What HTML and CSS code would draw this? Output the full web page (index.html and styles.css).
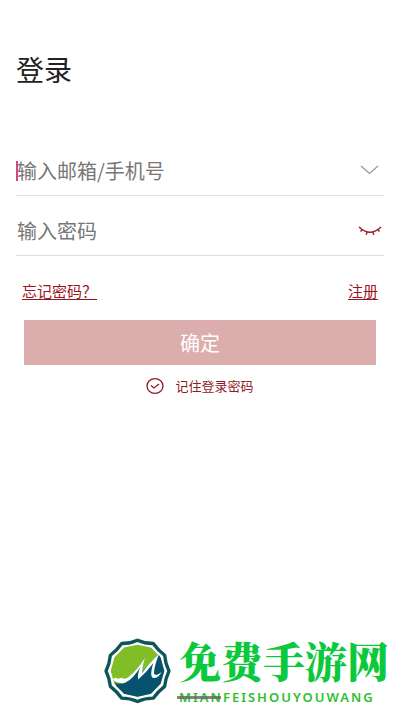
FILE: index.html
```html
<!DOCTYPE html>
<html lang="zh-CN">
<head>
    <meta charset="UTF-8">
    <meta name="viewport" content="width=device-width, initial-scale=1.0">
    <title>登录</title>
    <link rel="stylesheet" href="styles.css">
</head>
<body>
    <main class="login">
        <h1>登录</h1>

        <form>
            <div class="field">
                <span class="caret"></span>
                <input type="text" placeholder="输入邮箱/手机号" aria-label="输入邮箱/手机号">
                <button type="button" class="icon-button" aria-label="历史账号">
                    <svg width="24" height="20" viewBox="0 0 24 20" fill="none" stroke="#999" stroke-width="1.3">
                        <path d="M3 6 L11.500 13.500 L20 6"/>
                    </svg>
                </button>
            </div>
            <div class="field">
                <input type="password" placeholder="输入密码" aria-label="输入密码">
                <button type="button" class="icon-button" aria-label="显示密码">
                    <svg width="24" height="20" viewBox="0 0 24 20" fill="none" stroke="#9c1c28" stroke-width="1.400">
                        <path d="M1 6 Q12 16.500 23 6"/>
                        <path d="M4.500 8.500 L2.500 10.500 M9 10.800 L8.300 13.800 M15 10.800 L15.700 13.800 M19.500 8.500 L21.500 10.500"/>
                    </svg>
                </button>
            </div>

            <div class="links">
                <a href="#forgot">忘记密码？</a>
                <a href="#register">注册</a>
            </div>

            <button type="submit" class="submit">确定</button>

            <label class="remember">
                <input type="checkbox" checked>
                <svg width="18" height="18" viewBox="0 0 18 18" fill="none" stroke="#8f1a26" stroke-width="1.3">
                    <ellipse cx="9" cy="9" rx="8" ry="7.300"/>
                    <path d="M5 8.500 L8 11 L13 7"/>
                </svg>
                <span>记住登录密码</span>
            </label>
        </form>
    </main>

    <footer class="brand">
        <svg class="brand-logo" viewBox="28 28 200 196" aria-hidden="true">
            <path fill="#fff" stroke="#0d5559" stroke-width="10" stroke-linejoin="round" d="M128 34 Q150 44 175 44 Q190 65 209 79 Q211 103 222 126 Q211 149 209 172 Q190 187 175 207 Q150 207 128 217 Q106 207 81 207 Q66 187 47 172 Q45 149 34 126 Q45 103 47 79 Q66 65 81 44 Q106 44 128 34 Z"/>
            <path fill="#80bd27" d="M128 48 L168 56 L197 86 L208 126 L197 164 L168 194 L128 203 L88 194 L59 164 L48 126 L59 86 L88 56 Z"/>
            <path fill="#07536f" d="M60 160 Q76 168 93 159 Q119 147 148 92 L141 130 L190 76 L197 86 L208 126 L197 164 L168 194 L128 203 L88 194 L66 172 Z"/>
            <path fill="#fff" d="M54 152 Q61 142 69 149 L82 146 Q91 153 102 143 Q127 124 150 87 Q142 116 142 132 Q160 106 193 74 Q178 110 177 133 Q182 144 200 129 Q189 149 175 147 Q163 143 175 103 Q155 130 130 151 Q127 134 137 113 Q115 150 91 161 Q72 167 54 152 Z"/>
        </svg>
        <div class="brand-text">
            <div class="brand-name">免费手游网</div>
            <div class="brand-latin">MIANFEISHOUYOUWANG<span class="home-bar"></span></div>
        </div>
    </footer>
</body>
</html>
```

FILE: styles.css
```css
* {
    box-sizing: border-box;
}

body {
    margin: 0;
    min-height: 100vh;
    display: flex;
    flex-direction: column;
    justify-content: space-between;
    background-color: #fff;
    font-family: "Noto Sans CJK SC", sans-serif;
}

button, input {
    font-family: inherit;
}

.login {
    padding: 49px 16px 0;
}

h1 {
    margin: 0 0 46px;
    font-size: 28px;
    line-height: 40px;
    font-weight: 400;
    color: #222;
}

/* Input rows */
.field {
    position: relative;
    display: flex;
    align-items: center;
    height: 61px;
    padding-top: 10px;
    border-bottom: 1px solid #ddd;
}

.field + .field {
    height: 60px;
}

.field input {
    flex: 1;
    min-width: 0;
    height: 40px;
    padding: 0 0 0 1px;
    border: 0;
    outline: 0;
    background: none;
    font-size: 20px;
    color: #222;
}

.field input::placeholder {
    color: #777;
}

.caret {
    position: absolute;
    left: 0;
    top: 26px;
    width: 2px;
    height: 20px;
    background-color: #d0478c;
}

.icon-button {
    padding: 0 2px 0 0;
    border: 0;
    background: none;
}

.icon-button svg {
    display: block;
}

/* Links under the fields */
.links {
    display: flex;
    justify-content: space-between;
    padding: 24px 6px 18px;
}

.links a {
    font-size: 15px;
    line-height: 22px;
    color: #991420;
    text-underline-offset: 2px;
    text-decoration-thickness: 1px;
}

.submit {
    display: block;
    width: calc(100% - 16px);
    height: 45px;
    margin: 0 8px;
    padding: 0;
    border: 0;
    background-color: #dcadad;
    font-size: 20px;
    color: #fff;
}

.remember {
    display: flex;
    align-items: center;
    justify-content: center;
    gap: 11px;
    margin-top: 11px;
    font-size: 13px;
    line-height: 20px;
    color: #8f1a26;
}

.remember input {
    position: absolute;
    opacity: 0;
}

/* Brand in the bottom corner */
.brand {
    display: flex;
    justify-content: flex-end;
    align-items: center;
    gap: 8px;
    padding: 0 11px 6px 0;
}

.brand-logo {
    width: 67px;
    height: 66px;
}

.brand-name {
    font-family: "Noto Serif CJK SC", "Noto Sans CJK SC", serif;
    font-size: 42px;
    line-height: 48px;
    font-weight: 900;
    color: #0cc83c;
}

.brand-latin {
    position: relative;
    margin-top: 5px;
    font-family: "Noto Sans", sans-serif;
    font-size: 13px;
    line-height: 16px;
    font-weight: 600;
    letter-spacing: 2px;
    color: #2cc02c;
}

.home-bar {
    position: absolute;
    left: -2px;
    top: 7px;
    width: 44px;
    height: 3px;
    background-color: rgba(100, 100, 100, 0.8);
}
```
